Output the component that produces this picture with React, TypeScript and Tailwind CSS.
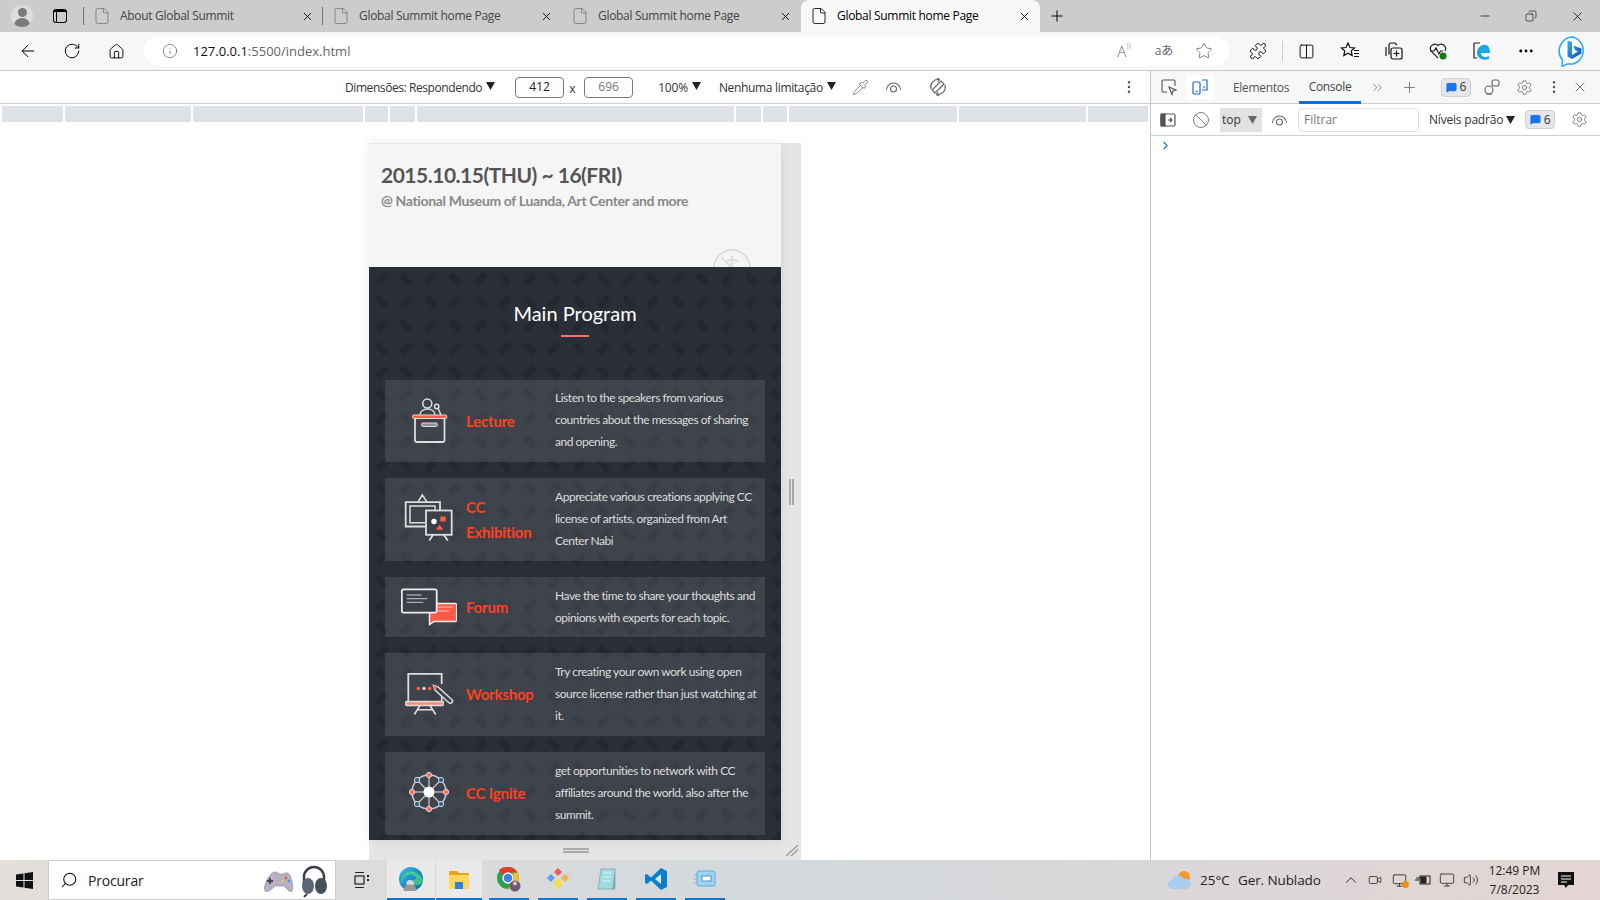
import React from 'react';
import {
  ArrowLeft, RotateCw, Home, Info, Star, Puzzle, Columns2, MoreHorizontal, MoreVertical, X, Plus, Minus, File,
  Pipette, Ban, Settings, ChevronsRight, ChevronRight, ChevronUp, Search, Volume2, Monitor, Copy,
  Video, MessageSquare,
} from 'lucide-react';

const chrome = { fontFamily: '"Open Sans", "Noto Sans", sans-serif' };
const lato = { fontFamily: 'Lato, sans-serif' };

const ruler = [61, 126, 170, 23, 25, 317, 25, 24, 168, 127, 60];

const Triangle = ({ className = '' }: { className?: string }) => (
  <svg width="9" height="8" viewBox="0 0 9 8" className={className}>
    <path d="M0 0h9L4.500 8z" fill="currentColor" />
  </svg>
);

const ArcEye = ({ className = '' }: { className?: string }) => (
  <svg width="17" height="14" viewBox="0 0 17 14" fill="none" stroke="#666" strokeWidth="1.100" className={className}>
    <path d="M1.500 10a7 7 0 0 1 14 0" />
    <path d="M2.500 11.500h0M14.500 11.500h0" />
    <circle cx="8.500" cy="9" r="3" />
  </svg>
);

const Tab = ({ title, active }: { title: string; active?: boolean }) => (
  <div className={`w-[239px] h-full flex items-center pl-[12px] pr-[9px] ${active ? 'bg-[#f7f7f7] rounded-t-lg text-black' : 'text-[#444]'}`}>
    <File size={18} strokeWidth={1.100} className={`-ml-[3px] ${active ? 'text-black' : 'text-[#777]'}`} />
    <span className="ml-[9px] flex-1 text-[12px] tracking-[-0.3px]">{title}</span>
    <X size={13} strokeWidth={1.600} className="text-black" />
  </div>
);

const Badge = () => (
  <div className="h-[19px] w-[30px] bg-[#e4e6e8] border border-[#d0d0d0] rounded-sm flex items-center justify-center gap-[3px] text-[12px] text-[#333]">
    <MessageSquare size={11} className="text-[#1a73e8] fill-[#1a73e8]" />
    6
  </div>
);

const BingLogo = () => (
  <svg width="30" height="31" viewBox="0 0 30 31">
    <defs>
      <linearGradient id="bingb" x1="0" y1="0" x2="1" y2="1">
        <stop offset="0" stopColor="#2fb4f5" />
        <stop offset="1" stopColor="#0a4fb8" />
      </linearGradient>
    </defs>
    <path d="M15 1a14 14 0 0 1 0 27H9l-5 2.500 .5-6.500A14 14 0 0 1 15 1z" fill="#fff" stroke="#29a9ee" strokeWidth="1.500" />
    <path d="M9.500 4.500l4.500 1.500v13l6-3.500-3-1.500-1.800-4.500 8.300 3v5L14 23l-4.500-2.500z" fill="url(#bingb)" />
  </svg>
);

const EdgeLogo = ({ size = 26 }: { size?: number }) => (
  <svg width={size} height={size} viewBox="0 0 28 28">
    <defs>
      <linearGradient id="edgeg" x1="0" y1="0" x2="1" y2="1">
        <stop offset="0" stopColor="#35c1f1" />
        <stop offset="1" stopColor="#0c59a4" />
      </linearGradient>
    </defs>
    <circle cx="14" cy="14" r="13" fill="url(#edgeg)" />
    <path d="M27 17c-2 4-7 5-10 3-3-2-1-6 3-6-1-4-6-6-10-4-4 2-6 6-5 10C2 13 7 5 15 6c7 1 12 6 12 11z" fill="#4ee07c" opacity=".7" />
    <circle cx="13" cy="19" r="4" fill="#d9d9d9" />
    <path d="M6 27c0-5 3-7 7-7s7 2 7 7z" fill="#999" />
  </svg>
);

// icons of the program cards, all in a 56 box centred on the card
const LectureIcon = () => (
  <svg width="56" height="56" viewBox="0 0 56 56" fill="none" stroke="#ddd" strokeWidth="1.500">
    <rect x="14" y="25" width="29.500" height="24" rx="1.500" strokeWidth="1.800" />
    <rect x="11.700" y="22" width="34" height="3.500" rx="1" fill="#ff5a45" stroke="#ddd" strokeWidth="1" />
    <circle cx="26.300" cy="10.500" r="4.500" />
    <path d="M19 22c0-8 15-8 15 0" />
    <circle cx="35.700" cy="13.500" r="2.200" />
    <path d="M37 15l3 7" />
    <rect x="20.700" y="30" width="15.600" height="3.500" rx="1" fill="#8d8f95" strokeWidth="1" />
  </svg>
);

const ExhibitionIcon = () => (
  <svg width="56" height="56" viewBox="0 0 56 56" fill="none" stroke="#ddd" strokeWidth="1.500">
    <path d="M17 10l4.300-7 4.700 7" />
    <path d="M25 34.500H4.700V10.200H39V18.500" strokeWidth="1.800" />
    <path d="M25 30.800H9V14H34v4.500" />
    <rect x="25" y="18.500" width="25.700" height="24.300" fill="#3c3f48" strokeWidth="1.800" />
    <path d="M32 43l-3.700 5.500M43 43l3.700 5.500" strokeWidth="1.800" />
    <circle cx="33" cy="29.500" r="2.700" fill="#fff" stroke="none" />
    <rect x="39.300" y="24.500" width="5.400" height="5" fill="#ff5a45" stroke="none" />
    <path d="M38.700 32.500l3.500 5.300h-7z" fill="#ff5a45" stroke="none" />
  </svg>
);

const ForumIcon = () => (
  <svg width="56" height="56" viewBox="0 0 56 56" fill="none" stroke="#eee" strokeWidth="1.500">
    <path d="M30 24.500h24.200a1.500 1.500 0 0 1 1.500 1.500v15a1.500 1.500 0 0 1-1.500 1.500H33l-4.500 3V24.500z" fill="#ff5a45" />
    <path d="M2.500 10.300h31.500a1.700 1.700 0 0 1 1.700 1.700v20a1.700 1.700 0 0 1-1.700 1.700H2.500A1.700 1.700 0 0 1 .8 32V12a1.700 1.700 0 0 1 1.700-1.700z" fill="#3c3f48" strokeWidth="1.800" />
    <path d="M5.700 16h15M5.700 19.700h20.600M5.700 23.300h16.600" stroke="#ccc" strokeWidth="1" />
    <path d="M37 28h15M37 32h11" stroke="#ffc5bb" strokeWidth="1" />
  </svg>
);

const WorkshopIcon = () => (
  <svg width="56" height="56" viewBox="0 0 56 56" fill="none" stroke="#ddd" strokeWidth="1.600">
    <path d="M40.700 17V6.800H7.300v28" strokeWidth="1.800" />
    <path d="M40.700 30v5" />
    <rect x="4.700" y="34.500" width="37.600" height="4" rx=".8" fill="#ff8a78" strokeWidth="1.300" />
    <path d="M19 38.500l-5.700 9M29 38.500l5.700 9M16 42.800h16" />
    <circle cx="17.300" cy="21.500" r="1.800" fill="#ff5a45" stroke="none" />
    <circle cx="23" cy="21.500" r="1.800" fill="#ccc" stroke="none" />
    <circle cx="28.700" cy="21.500" r="1.800" fill="#ff5a45" stroke="none" />
    <path d="M32.500 18.500l4.500 1.500 13.800 12.500a2 2 0 0 1-3 3.200L34 23z" strokeWidth="1.500" />
    <path d="M32.500 18.500l4.500 1.500-3 3z" fill="#ff5a45" stroke="none" />
  </svg>
);

const IgniteIcon = () => {
  const nodes = Array.from({ length: 8 }, (_, i) => {
    const a = (i * Math.PI) / 4;
    return { x: 28 + 17 * Math.sin(a), y: 26 - 17 * Math.cos(a), even: i % 2 === 0 };
  });
  return (
    <svg width="56" height="56" viewBox="0 0 56 56" fill="none" stroke="#ccc" strokeWidth="1.200">
      <circle cx="28" cy="26" r="17" strokeWidth="1.500" />
      {nodes.map((n, i) => (
        <path key={i} d={`M28 26L${n.x} ${n.y}`} />
      ))}
      <circle cx="28" cy="26" r="5.500" fill="#fff" stroke="none" />
      {nodes.map((n, i) => (
        <circle key={i} cx={n.x} cy={n.y} r="2.600" fill={n.even ? '#ff6a55' : '#2e5d95'} stroke="#ddd" strokeWidth="1" />
      ))}
    </svg>
  );
};

const programs = [
  { title: ['Lecture'], h: 'h-[82px]', icon: <LectureIcon />, text: ['Listen to the speakers from various', 'countries about the messages of sharing', 'and opening.'] },
  { title: ['CC', 'Exhibition'], h: 'h-[83px]', icon: <ExhibitionIcon />, text: ['Appreciate various creations applying CC', 'license of artists, organized from Art', 'Center Nabi'] },
  { title: ['Forum'], h: 'h-[60px]', icon: <ForumIcon />, text: ['Have the time to share your thoughts and', 'opinions with experts for each topic.'] },
  { title: ['Workshop'], h: 'h-[83px]', icon: <WorkshopIcon />, text: ['Try creating your own work using open', 'source license rather than just watching at', 'it.'] },
  { title: ['CC Ignite'], h: 'h-[83px]', icon: <IgniteIcon />, text: ['get opportunities to network with CC', 'affiliates around the world, also after the', 'summit.'] },
];

const ProgramCard = ({ p }: { p: (typeof programs)[number] }) => (
  <div className={`relative flex items-center bg-white/10 ${p.h}`}>
    <div className="w-[81px] pl-[16px] shrink-0">{p.icon}</div>
    <div className="w-[89px] shrink-0 text-[15px] leading-[25px] font-bold text-[#ff4022] tracking-[-0.2px]">
      {p.title.map((t) => (
        <div key={t}>{t}</div>
      ))}
    </div>
    <div className={`text-[12px] leading-[22px] text-[#ddd] tracking-[-0.46px] whitespace-nowrap ${p.text.length === 3 ? '-mt-[2px]' : ''}`}>
      {p.text.map((t) => (
        <div key={t}>{t}</div>
      ))}
    </div>
  </div>
);

const Phone = () => (
  <div className="h-[697px] overflow-hidden bg-[#f5f5f5] border-t border-[#e6e6e6] shadow-[0_0_12px_rgba(0,0,0,0.08)] flex flex-col" style={lato}>
    <div className="relative h-[123px] shrink-0 pl-[12px] pt-[18px] overflow-hidden">
      <h1 className="text-[21px] leading-[26px] font-bold text-[#555] tracking-[-0.5px]">2015.10.15(THU) ~ 16(FRI)</h1>
      <p className="mt-[3px] text-[14px] leading-[20px] font-bold text-[#888] tracking-[-0.35px]">@ National Museum of Luanda, Art Center and more</p>
      <svg width="40" height="40" viewBox="0 0 40 40" fill="none" stroke="#ddd" strokeWidth="2" className="absolute left-[343px] top-[104px]">
        <circle cx="20" cy="20" r="18" />
        <path d="M9 9l22 22M14 14c2-3 10-3 12 0M20 8v12" />
      </svg>
    </div>
    <div className="relative flex-1 bg-[#2a2e37] overflow-hidden">
      <svg className="absolute inset-0 w-full h-full" aria-hidden="true">
        <defs>
          <pattern id="bars" width="49.400" height="46.600" patternUnits="userSpaceOnUse">
            <g stroke="#242831" strokeWidth="7">
              <path d="M8 17L17.500 7M32 7l9.500 10M8 30l9.500 10M32 40l9.500-10" />
            </g>
          </pattern>
        </defs>
        <rect width="100%" height="100%" fill="url(#bars)" />
      </svg>
      <div className="relative px-[16px]">
        <h2 className="pt-[31px] text-center text-[20px] leading-[30px] text-white">Main Program</h2>
        <div className="mx-auto mt-[7px] w-[28px] h-[2px] bg-[#f4706a]" />
        <div className="mt-[43px] flex flex-col gap-[16px]">
          {programs.map((p) => (
            <ProgramCard key={p.title[0]} p={p} />
          ))}
        </div>
      </div>
    </div>
  </div>
);

const DevTools = () => (
  <div className="w-[450px] shrink-0 border-l border-[#c8c8c8] bg-white text-[12px] text-[#555]">
    <div className="h-[33px] bg-[#f7f7f7] border-b border-[#d0d0d0] flex items-center pl-[8px]">
      <div className="w-[19px] flex justify-center">
        <svg width="18" height="18" viewBox="0 0 18 18" fill="none" stroke="#555" strokeWidth="1.100">
          <path d="M7 14H3a1 1 0 0 1-1-1V3a1 1 0 0 1 1-1h11a1 1 0 0 1 1 1v5" />
          <path d="M9 9l7 3-3 1-1 3.500z" />
        </svg>
      </div>
      <div className="ml-[8px] w-[28px] h-[24px] bg-white flex items-center justify-center">
        <svg width="18" height="18" viewBox="0 0 18 18" fill="none" stroke="#1a6fd0" strokeWidth="1.200">
          <rect x="2" y="4" width="7" height="12" rx="1" />
          <path d="M11 2h5v10h-5M12 9h2" />
          <path d="M4.500 13.500h2" />
        </svg>
      </div>
      <span className="ml-[19px] w-[66px] pt-[2px] tracking-[-0.3px]">Elementos</span>
      <div className="w-[62px] h-[33px] flex items-center justify-center border-b-[3px] border-[#0a6fd6] pt-[3px] text-[#444] tracking-[-0.3px]">Console</div>
      <ChevronsRight size={15} strokeWidth={1.200} className="ml-[9px] text-[#666]" />
      <Plus size={17} strokeWidth={1.300} className="ml-[16px] text-[#777]" />
      <div className="ml-[23px]"><Badge /></div>
      <svg width="18" height="18" viewBox="0 0 18 18" fill="none" stroke="#666" strokeWidth="1.100" className="ml-[12px]">
        <circle cx="6" cy="12" r="4" />
        <rect x="9" y="2" width="7" height="6" rx="2" />
        <path d="M3 16h6" />
      </svg>
      <Settings size={17} strokeWidth={1.200} className="ml-[15px] text-[#666]" />
      <MoreVertical size={16} strokeWidth={1.800} className="ml-[13px] text-[#555]" />
      <X size={16} strokeWidth={1.200} className="ml-[10px] text-[#555]" />
    </div>
    <div className="h-[32px] border-b border-[#d0d0d0] flex items-center pl-[9px]">
      <svg width="16" height="16" viewBox="0 0 16 16" fill="none" stroke="#555" strokeWidth="1.200">
        <rect x="1" y="2" width="14" height="12" rx="1.500" />
        <path d="M1 2h4v12H1z" fill="#555" />
        <path d="M8 8h4M10 6l2 2-2 2" />
      </svg>
      <Ban size={18} strokeWidth={1.100} className="ml-[16px] text-[#666]" />
      <div className="ml-[10px] w-[42px] h-[24px] bg-[#e2e2e2] flex items-center justify-between pl-[2px] pr-[5px] text-[#333]">top<Triangle className="text-[#666]" /></div>
      <ArcEye className="ml-[9px]" />
      <div className="ml-[10px] w-[121px] h-[24px] border border-[#e0e0e0] rounded-sm px-[5px] flex items-center text-[#777]">Filtrar</div>
      <span className="ml-[10px] text-[#333] tracking-[-0.2px]">Níveis padrão</span>
      <Triangle className="ml-[3px] text-[#222]" />
      <div className="ml-[10px]"><Badge /></div>
      <Settings size={17} strokeWidth={1.200} className="ml-[16px] text-[#666]" />
    </div>
    <ChevronRight size={13} strokeWidth={2} className="ml-[8px] mt-[3px] text-[#1a73e8]" />
  </div>
);

const Viewport = () => (
  <div className="w-[1150px] shrink-0 flex flex-col bg-white text-[12px] text-[#333]">
    <div className="h-[33px] shrink-0 border-b border-[#d0d0d0] flex items-center pl-[345px]">
      <span className="pt-[2px] tracking-[-0.42px]">Dimensões: Respondendo</span>
      <Triangle className="ml-[4px] -mt-[2px] text-[#222]" />
      <div className="ml-[20px] w-[49px] h-[21px] border border-[#777] rounded-sm flex items-center justify-center text-[#222]">412</div>
      <span className="ml-[5px] w-[15px] mt-[3px]">x</span>
      <div className="w-[49px] h-[21px] border border-[#777] rounded-sm flex items-center justify-center text-[#777]">696</div>
      <span className="ml-[25px] pt-[2px] tracking-[-0.2px]">100%</span>
      <Triangle className="ml-[4px] -mt-[2px] text-[#222]" />
      <span className="ml-[18px] pt-[2px] tracking-[-0.33px]">Nenhuma limitação</span>
      <Triangle className="ml-[4px] -mt-[2px] text-[#222]" />
      <Pipette size={17} strokeWidth={1.100} className="ml-[16px] text-[#666]" />
      <ArcEye className="ml-[16px]" />
      <svg width="20" height="20" viewBox="0 0 20 20" fill="none" stroke="#666" strokeWidth="1.200" className="ml-[26px]">
        <path d="M7 4l9 9-3 3-9-9z" transform="rotate(90 10 10)" />
        <path d="M3 12A7.500 7.500 0 0 1 11 2.500M17 8a7.500 7.500 0 0 1-8 9.500" />
        <path d="M9 1l2.500 1.500L10 5M11 19l-2.500-1.500L10 15" />
      </svg>
      <MoreVertical size={16} strokeWidth={1.800} className="ml-[173px] text-[#555]" />
    </div>
    <div className="mt-[2px] h-[16px] shrink-0 flex gap-[2px] px-[2px]">
      {ruler.map((w, i) => (
        <div key={i} className="bg-[#dee1e5]" style={{ width: w }} />
      ))}
    </div>
    <div className="flex-1 pl-[369px] pt-[21px]">
      <div className="w-[432px] h-[717px] bg-[#e5e5e5] grid grid-cols-[412px_20px] grid-rows-[697px_20px]">
        <Phone />
        <div className="flex items-center justify-center">
          <div className="w-[5px] h-[26px] border-x-[2px] border-[#aaa]" />
        </div>
        <div className="flex items-center justify-center pl-[2px]">
          <div className="w-[26px] h-[5px] border-y-[2px] border-[#aaa]" />
        </div>
        <svg width="20" height="20" viewBox="0 0 20 20" stroke="#999" strokeWidth="1.300">
          <path d="M5 16L17 5M10 16l7-6.500" />
        </svg>
      </div>
    </div>
  </div>
);

const Taskbar = () => (
  <div className="h-[40px] shrink-0 flex bg-gradient-to-r from-[#e4dfdb] via-[#d2d8dc] to-[#e3d5d3] text-[14px] text-[#222]" style={chrome}>
    <div className="w-[48px] flex items-center justify-center">
      <svg width="17" height="17" viewBox="0 0 17 17" fill="#111">
        <path d="M0 2.500l7.500-1v6.500H0zM8.500 1.300L17 0v8H8.500zM0 9h7.500v6.500l-7.500-1zM8.500 9H17v8l-8.500-1.300z" />
      </svg>
    </div>
    <div className="w-[288px] bg-white border border-[#cfcfcf] flex items-center pl-[11px]">
      <Search size={18} strokeWidth={1.400} className="-scale-x-100 text-[#111]" />
      <span className="ml-[10px] flex-1 tracking-[-0.2px]">Procurar</span>
      <svg width="36" height="28" viewBox="0 0 36 28" className="mr-[2px]">
        <path d="M10 8c4-4 7-1 9 0 3 1 6-3 9 0 3 4 5 14 3 17-2 2-5-2-8-5H14c-3 3-7 7-10 5-2-4 2-13 6-17z" fill="#b7afc4" stroke="#8d8698" strokeWidth=".6" />
        <path d="M9 12v6M6 15h6" stroke="#444" strokeWidth="2" />
        <circle cx="25" cy="12" r="1.300" fill="#e8564a" />
        <circle cx="28" cy="15" r="1.300" fill="#4a9ae8" />
        <circle cx="22" cy="15" r="1.300" fill="#ecc94a" />
      </svg>
      <svg width="30" height="36" viewBox="0 0 30 36" className="mr-[6px]" fill="none">
        <path d="M5 22V15a10 10 0 0 1 20 0v7" stroke="#3c4048" strokeWidth="2.500" />
        <ellipse cx="9" cy="24" rx="6" ry="8" fill="#5d6674" />
        <ellipse cx="22" cy="24" rx="6" ry="8" fill="#47505d" />
        <path d="M8 32l-3 3" stroke="#3c4048" strokeWidth="2" />
      </svg>
    </div>
    <div className="w-[51px] flex items-center justify-center">
      <svg width="17" height="20" viewBox="0 0 17 20" fill="none" stroke="#222" strokeWidth="1.200">
        <rect x="2" y="6" width="9" height="8" />
        <path d="M2 2.500h9M2 17.500h9" />
        <path d="M14 6h2M14 10h2" strokeWidth="2" />
      </svg>
    </div>
    <div className="w-[48px] bg-white/40 border-b-[2px] border-[#0a78d4] flex items-center justify-center"><EdgeLogo /></div>
    <div className="ml-[1px] w-[46px] bg-white/40 border-b-[2px] border-[#0a78d4] flex items-center justify-center">
      <svg width="24" height="24" viewBox="0 0 24 24">
        <path d="M2 4h8l2 2h10v4H2z" fill="#e8a21d" />
        <path d="M2 8h20v14H2z" fill="#ffd55c" />
        <path d="M8 22v-7h8v7z" fill="#2a87d8" />
      </svg>
    </div>
    <div className="ml-[7px] w-[40px] border-b-[2px] border-[#0a78d4] flex items-center justify-center">
      <svg width="26" height="26" viewBox="0 0 26 26">
        <circle cx="12" cy="12" r="11" fill="#2e9f4d" />
        <path d="M12 1a11 11 0 0 1 9.500 5.500H12A5.500 5.500 0 0 0 7 9.500L3 4A11 11 0 0 1 12 1z" fill="#e0392d" />
        <path d="M21.500 6.500A11 11 0 0 1 12 23l4.500-8A5.500 5.500 0 0 0 16 7z" fill="#f7c02a" />
        <circle cx="12" cy="12" r="5" fill="#3b82e8" stroke="#fff" strokeWidth="1.300" />
        <circle cx="19" cy="20" r="5.500" fill="#6d5a78" />
        <circle cx="19" cy="17.500" r="2" fill="#e2c4a8" />
      </svg>
    </div>
    <div className="ml-[9px] w-[40px] border-b-[2px] border-[#0a78d4] flex items-center justify-center">
      <svg width="26" height="26" viewBox="0 0 26 26">
        <path d="M13 2l4 4-4 4-4-4z" fill="#ea5b55" />
        <path d="M6 8l4 4-4 4-4-4z" fill="#5aa0ec" />
        <path d="M20 8l4 4-4 4-4-4z" fill="#f0b64a" />
        <path d="M13 12l5 5-5 7-5-7z" fill="#f1dd55" />
      </svg>
    </div>
    <div className="ml-[9px] w-[40px] border-b-[2px] border-[#0a78d4] flex items-center justify-center">
      <svg width="24" height="26" viewBox="0 0 24 26">
        <path d="M6 3h14v20H3z" fill="#9fdbe0" stroke="#7e9da3" strokeWidth=".7" />
        <path d="M3 23h14l3-20v20z" fill="#6a8c92" opacity=".5" />
        <path d="M9 7h7M8 11h8M7 15h8" stroke="#e5f5f5" strokeWidth="1" />
      </svg>
    </div>
    <div className="ml-[9px] w-[40px] border-b-[2px] border-[#0a78d4] flex items-center justify-center">
      <svg width="24" height="24" viewBox="0 0 24 24">
        <path d="M17 1l6 3v16l-6 3L7 13.500 3 17l-2-1V8l2-1 4 3.500z" fill="#0a7fd0" />
        <path d="M17 7l-6 5 6 5z" fill="#d7e8f3" />
      </svg>
    </div>
    <div className="ml-[9px] w-[40px] border-b-[2px] border-[#0a78d4] flex items-center justify-center">
      <svg width="24" height="22" viewBox="0 0 24 22">
        <rect x="4" y="3" width="18" height="15" rx="2" fill="#9fd3f2" stroke="#5da9dc" />
        <rect x="9" y="8" width="9" height="5" fill="#fff" stroke="#4e91c4" />
        <path d="M1 7h3M1 11h3M1 15h3" stroke="#7fbde6" />
      </svg>
    </div>
    <div className="flex-1" />
    <div className="flex items-center text-[#222]">
      <svg width="24" height="20" viewBox="0 0 24 20" className="mr-[8px]">
        <circle cx="16" cy="7" r="6" fill="#f29a2e" />
        <path d="M5 19a4.500 4.500 0 0 1-1-9 6.500 6.500 0 0 1 12-1 5 5 0 0 1 3 10z" fill="#a8cdee" />
      </svg>
      <span className="w-[38px] text-[13.500px]">25°C</span>
      <span className="w-[100px] text-[13.500px] tracking-[-0.1px]">Ger. Nublado</span>
      <div className="w-[25px] flex justify-center"><ChevronUp size={18} strokeWidth={1.300} /></div>
      <div className="w-[24px] flex justify-center"><Video size={14} strokeWidth={1.300} /></div>
      <div className="w-[24px] flex justify-center relative">
        <Monitor size={15} strokeWidth={1.300} />
        <span className="absolute right-[2px] bottom-0 w-[7px] h-[7px] rounded-full bg-[#f08a1d]" />
      </div>
      <div className="w-[24px] flex justify-center">
        <svg width="16" height="12" viewBox="0 0 16 12" fill="none" stroke="#222">
          <rect x="5" y="2" width="10" height="8" />
          <rect x="6" y="3" width="5" height="6" fill="#222" />
          <path d="M0 6h4M2 3v2M4 3v2" />
        </svg>
      </div>
      <div className="w-[24px] flex justify-center"><Monitor size={16} strokeWidth={1.200} /></div>
      <div className="w-[24px] flex justify-center"><Volume2 size={16} strokeWidth={1.200} /></div>
      <div className="ml-[1px] w-[61px] text-center text-[12px] leading-[19px]">
        <div>12:49 PM</div>
        <div>7/8/2023</div>
      </div>
      <div className="w-[42px] flex justify-center">
        <svg width="18" height="18" viewBox="0 0 18 18">
          <path d="M1 1h16v13h-6l-2 3-2-3H1z" fill="#111" />
          <path d="M4 5h10M4 8h10M4 11h6" stroke="#fff" />
        </svg>
      </div>
      <div className="w-[13px]" />
    </div>
  </div>
);

export default function App() {
  return (
    <div className="w-[1600px] h-[900px] overflow-hidden flex flex-col bg-white" style={chrome}>
      {/* tab strip */}
      <div className="h-[32px] shrink-0 bg-[#cccccc] flex items-center">
        <div className="w-[83px] h-full flex items-center relative">
          <div className="ml-[11px] w-[22px] h-[22px] rounded-full bg-[#dcdcdc] flex flex-col items-center overflow-hidden">
            <div className="mt-[3px] w-[9px] h-[9px] rounded-full bg-[#7a7a7a]" />
            <div className="mt-[1px] w-[16px] h-[10px] rounded-t-full bg-[#7a7a7a]" />
          </div>
          <div className="ml-[20px] w-[14px] h-[14px] border-[1.500px] border-black rounded-[3px] border-t-[3px] flex">
            <div className="w-[3px] border-r border-black" />
          </div>
        </div>
        <div className="w-px h-[18px] bg-[#777]" />
        <Tab title="About Global Summit" />
        <div className="w-px h-[18px] bg-[#777] -ml-px" />
        <Tab title="Global Summit home Page" />
        <Tab title="Global Summit home Page" />
        <Tab title="Global Summit home Page" active />
        <Plus size={18} strokeWidth={1.300} className="ml-[8px] text-black" />
        <div className="flex-1" />
        <Minus size={14} strokeWidth={1.200} className="text-black" />
        <Copy size={12} strokeWidth={1.200} className="ml-[33px] text-black -scale-x-100" />
        <X size={15} strokeWidth={1.200} className="ml-[33px] mr-[15px] text-black" />
      </div>
      {/* address bar */}
      <div className="h-[39px] shrink-0 bg-[#f7f7f7] border-b border-[#c8c8c8] flex items-center pl-[6px]">
        <div className="w-[44px] flex justify-center"><ArrowLeft size={20} strokeWidth={1.200} className="text-black" /></div>
        <div className="w-[44px] flex justify-center"><RotateCw size={18} strokeWidth={1.300} className="text-black" /></div>
        <div className="w-[44px] flex justify-center"><Home size={17} strokeWidth={1.300} className="text-black" /></div>
        <div className="ml-[6px] w-[1085px] h-[30px] bg-white rounded-full flex items-center pl-[18px] pr-[5px] text-[13px]">
          <Info size={16} strokeWidth={1.100} className="text-[#666]" />
          <span className="ml-[15px] pt-[2px] flex-1 text-[#111]">
            127.0.0.1<span className="text-[#666]">:5500/index.html</span>
          </span>
          <div className="w-[40px] flex justify-center items-start text-[#666] text-[15px] font-light">A<span className="text-[8px] leading-[10px]">))</span></div>
          <div className="w-[40px] flex justify-center text-[#666] text-[12px]" style={{ fontFamily: '"Open Sans", "Noto Sans CJK JP", sans-serif' }}>aあ</div>
          <div className="w-[40px] flex justify-center"><Star size={18} strokeWidth={1.100} className="text-[#666]" /></div>
        </div>
        <div className="ml-[7px] w-[44px] flex justify-center"><Puzzle size={18} strokeWidth={1.200} className="text-black" /></div>
        <div className="ml-[2px] w-px h-[20px] bg-[#ccc]" />
        <div className="w-[44px] ml-[1px] flex justify-center"><Columns2 size={17} strokeWidth={1.300} className="text-black" /></div>
        <div className="w-[44px] flex justify-center">
          <svg width="20" height="20" viewBox="0 0 20 20" fill="none" stroke="#111" strokeWidth="1.200">
            <path d="M8 2l2 4.500 4.500.5-3.300 3 1 4.500L8 12.300 3.800 14.500l1-4.500L1.500 7 6 6.500z" />
            <path d="M14 9.500h5M14 12.500h5M14 15.500h5" />
          </svg>
        </div>
        <div className="w-[44px] flex justify-center">
          <svg width="20" height="20" viewBox="0 0 20 20" fill="none" stroke="#111" strokeWidth="1.200">
            <path d="M5 13.500V4a2 2 0 0 1 2-2h4l2 2" />
            <path d="M2 15V6" />
            <rect x="7" y="7" width="11" height="11" rx="2" />
            <path d="M12.500 9.500v6M9.500 12.500h6" />
          </svg>
        </div>
        <div className="w-[44px] flex justify-center relative">
          <svg width="20" height="20" viewBox="0 0 20 20" fill="none" stroke="#222" strokeWidth="1.200">
            <path d="M10 17L3 10a4.500 4.500 0 0 1 7-5.500A4.500 4.500 0 0 1 17 10" />
            <path d="M2 10h4l2-3 3 6 1.500-3H15" />
            <circle cx="15" cy="15" r="3.500" fill="#107c10" stroke="none" />
          </svg>
        </div>
        <div className="w-[44px] flex justify-center">
          <svg width="20" height="20" viewBox="0 0 20 20" fill="none">
            <path d="M8 2H3a1 1 0 0 0-1 1v14h3" stroke="#222" strokeWidth="1.200" />
            <path d="M18 12H9c0 4 5 5 8 3v3c-5 2-12 0-12-6 0-6 5-9 9-8 3 1 4 4 4 8z" fill="#1ea7e8" />
          </svg>
        </div>
        <div className="w-[44px] flex justify-center"><MoreHorizontal size={18} strokeWidth={1.800} className="text-black" /></div>
        <div className="ml-[10px]"><BingLogo /></div>
      </div>
      <div className="flex-1 flex min-h-0">
        <Viewport />
        <DevTools />
      </div>
      <Taskbar />
    </div>
  );
}
